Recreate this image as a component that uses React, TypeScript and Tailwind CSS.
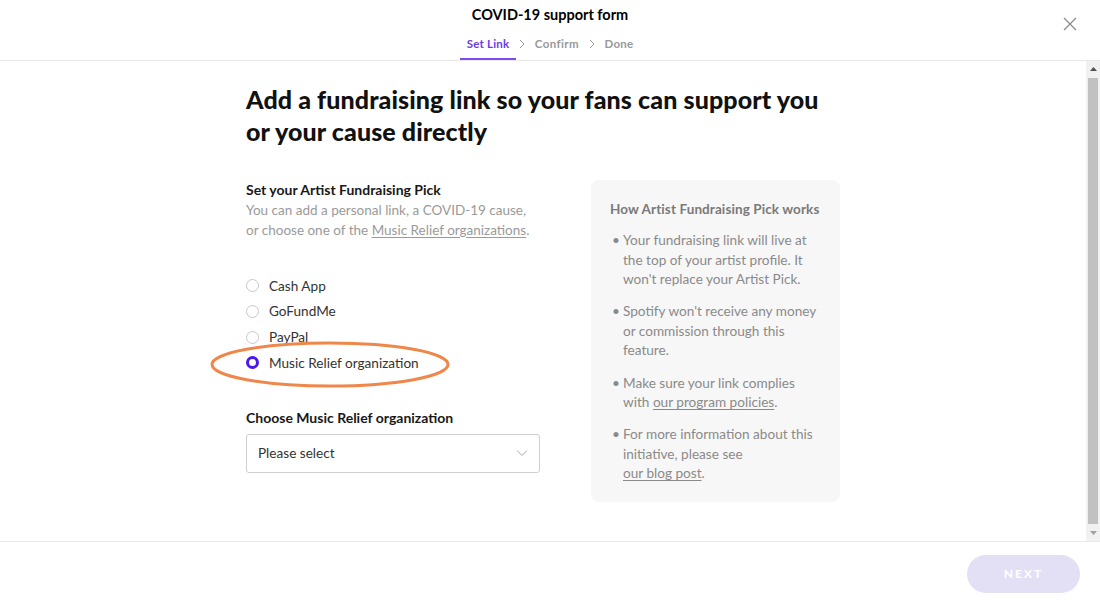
import React from "react";

const font = { fontFamily: "Lato, 'Liberation Sans', sans-serif" };

function Radio({ label, checked }: { label: string; checked?: boolean }) {
  return (
    <div className="flex items-center h-[25.7px]">
      {checked ? (
        <span className="w-[13px] h-[13px] rounded-full border-[3px] border-[#4b17f0] bg-white box-border" />
      ) : (
        <span className="w-[13px] h-[13px] rounded-full border border-[#c8c8c8] bg-white box-border" />
      )}
      <span className="ml-[10px] text-[13.6px] text-[#333]">{label}</span>
    </div>
  );
}

function Chevron() {
  return (
    <span className="w-[12.5px] flex justify-center -mt-[10px]">
      <svg width="8" height="10" viewBox="0 0 8 10"><path d="M2 1l4 4-4 4" stroke="#999" strokeWidth="1" fill="none" /></svg>
    </span>
  );
}

export default function App() {
  return (
    <div className="w-[1100px] h-[600px] flex flex-col bg-white overflow-hidden relative" style={font}>
      {/* Header */}
      <div className="h-[61px] border-b border-[#e8e8e8] flex flex-col items-center relative shrink-0">
        <div className="mt-[5px] text-[14.5px] font-bold text-black leading-[20px]">COVID-19 support form</div>
        <div className="mt-[12px] flex items-center text-[11.5px] font-bold leading-[14px]">
          <div className="flex flex-col items-center">
            <span className="text-[#6b3ce6] px-[6.5px] tracking-[0.2px]">Set Link</span>
            <span className="mt-[7px] h-[2px] w-full bg-[#7b4cf0]" />
          </div>
          <Chevron />
          <span className="text-[#999] px-[6.5px] -mt-[10px] tracking-[0.4px]">Confirm</span>
          <Chevron />
          <span className="text-[#999] px-[6.5px] -mt-[10px] tracking-[0.2px]">Done</span>
        </div>
        <button className="absolute right-[23px] top-[17px] w-[14px] h-[14px]">
          <svg width="14" height="14" viewBox="0 0 14 14"><path d="M1 1l12 12M13 1L1 13" stroke="#8a8a8a" strokeWidth="1.2" /></svg>
        </button>
      </div>

      {/* Body */}
      <div className="flex-1 flex min-h-0">
        <div className="flex-1 flex justify-center">
          <div className="w-[594px] pt-[22px]">
            <h1 className="text-[25px] leading-[32px] font-black text-[#111] tracking-[0.1px]">
              Add a fundraising link so your fans can support you or your cause directly
            </h1>
            <div className="mt-[33px] flex justify-between">
              <div className="w-[294px] relative">
                <div className="text-[14px] font-bold text-[#181818] leading-[20px]">Set your Artist Fundraising Pick</div>
                <p className="text-[13.5px] text-[#9a9a9a] leading-[19.5px] mt-[1px]">
                  You can add a personal link, a COVID-19 cause, or choose one of the{" "}
                  <span className="underline underline-offset-2">Music Relief organizations</span>.
                </p>
                <div className="mt-[33px]">
                  <Radio label="Cash App" />
                  <Radio label="GoFundMe" />
                  <Radio label="PayPal" />
                  <Radio label="Music Relief organization" checked />
                </div>
                <svg className="absolute left-[-37px] top-[160px]" width="242" height="50" viewBox="0 0 242 50">
                  <ellipse cx="121" cy="24.5" rx="118" ry="21.5" stroke="#f0874a" strokeWidth="3" fill="none" />
                </svg>
                <div className="mt-[32px] text-[14px] font-bold text-[#181818] leading-[20px]">Choose Music Relief organization</div>
                <div className="mt-[6px] h-[39px] w-[294px] border border-[#cfcfcf] rounded-[3px] flex items-center justify-between px-[11px]">
                  <span className="text-[13.6px] text-[#333]">Please select</span>
                  <svg width="12" height="8" viewBox="0 0 12 8"><path d="M1 1.5l5 5 5-5" stroke="#aaa" strokeWidth="1" fill="none" /></svg>
                </div>
              </div>
              <div className="w-[249px] h-[322px] bg-[#f7f7f7] rounded-[8px] px-[19px] pt-[20px]">
                <div className="text-[13.5px] font-bold text-[#7a7a7a] leading-[18px] tracking-[0.1px]">How Artist Fundraising Pick works</div>
                <ul className="mt-[13px] text-[13.6px] text-[#8a8a8a] leading-[19.6px] flex flex-col gap-[12.5px]">
                  <li className="flex"><span className="w-[13px] shrink-0 pl-[2px]">•</span><span>Your fundraising link will live at the top of your artist profile. It won't replace your Artist Pick.</span></li>
                  <li className="flex"><span className="w-[13px] shrink-0 pl-[2px]">•</span><span>Spotify won't receive any money or commission through this feature.</span></li>
                  <li className="flex"><span className="w-[13px] shrink-0 pl-[2px]">•</span><span>Make sure your link complies with <span className="underline underline-offset-2">our program policies</span>.</span></li>
                  <li className="flex"><span className="w-[13px] shrink-0 pl-[2px]">•</span><span>For more information about this initiative, please see <br /><span className="underline underline-offset-2">our blog post</span>.</span></li>
                </ul>
              </div>
            </div>
          </div>
        </div>
        {/* fake scrollbar */}
        <div className="w-[14px] bg-[#f1f1f1] flex flex-col items-center shrink-0">
          <div className="h-[16px] flex items-center justify-center">
            <svg width="7" height="4" viewBox="0 0 7 4"><path d="M0 4L3.5 0L7 4z" fill="#505050" /></svg>
          </div>
          <div className="flex-1 w-[10px] bg-[#c1c1c1] my-[1px]" />
          <div className="h-[16px] flex items-center justify-center">
            <svg width="7" height="4" viewBox="0 0 7 4"><path d="M0 0L3.5 4L7 0z" fill="#a0a0a0" /></svg>
          </div>
        </div>
      </div>

      {/* Footer */}
      <div className="h-[59px] border-t border-[#e8e8e8] flex items-center justify-end pr-[20px] pt-[6px] shrink-0">
        <button className="w-[113px] h-[38px] rounded-full bg-[#e3dff5] text-white text-[12px] font-bold tracking-[2px]">NEXT</button>
      </div>
    </div>
  );
}
